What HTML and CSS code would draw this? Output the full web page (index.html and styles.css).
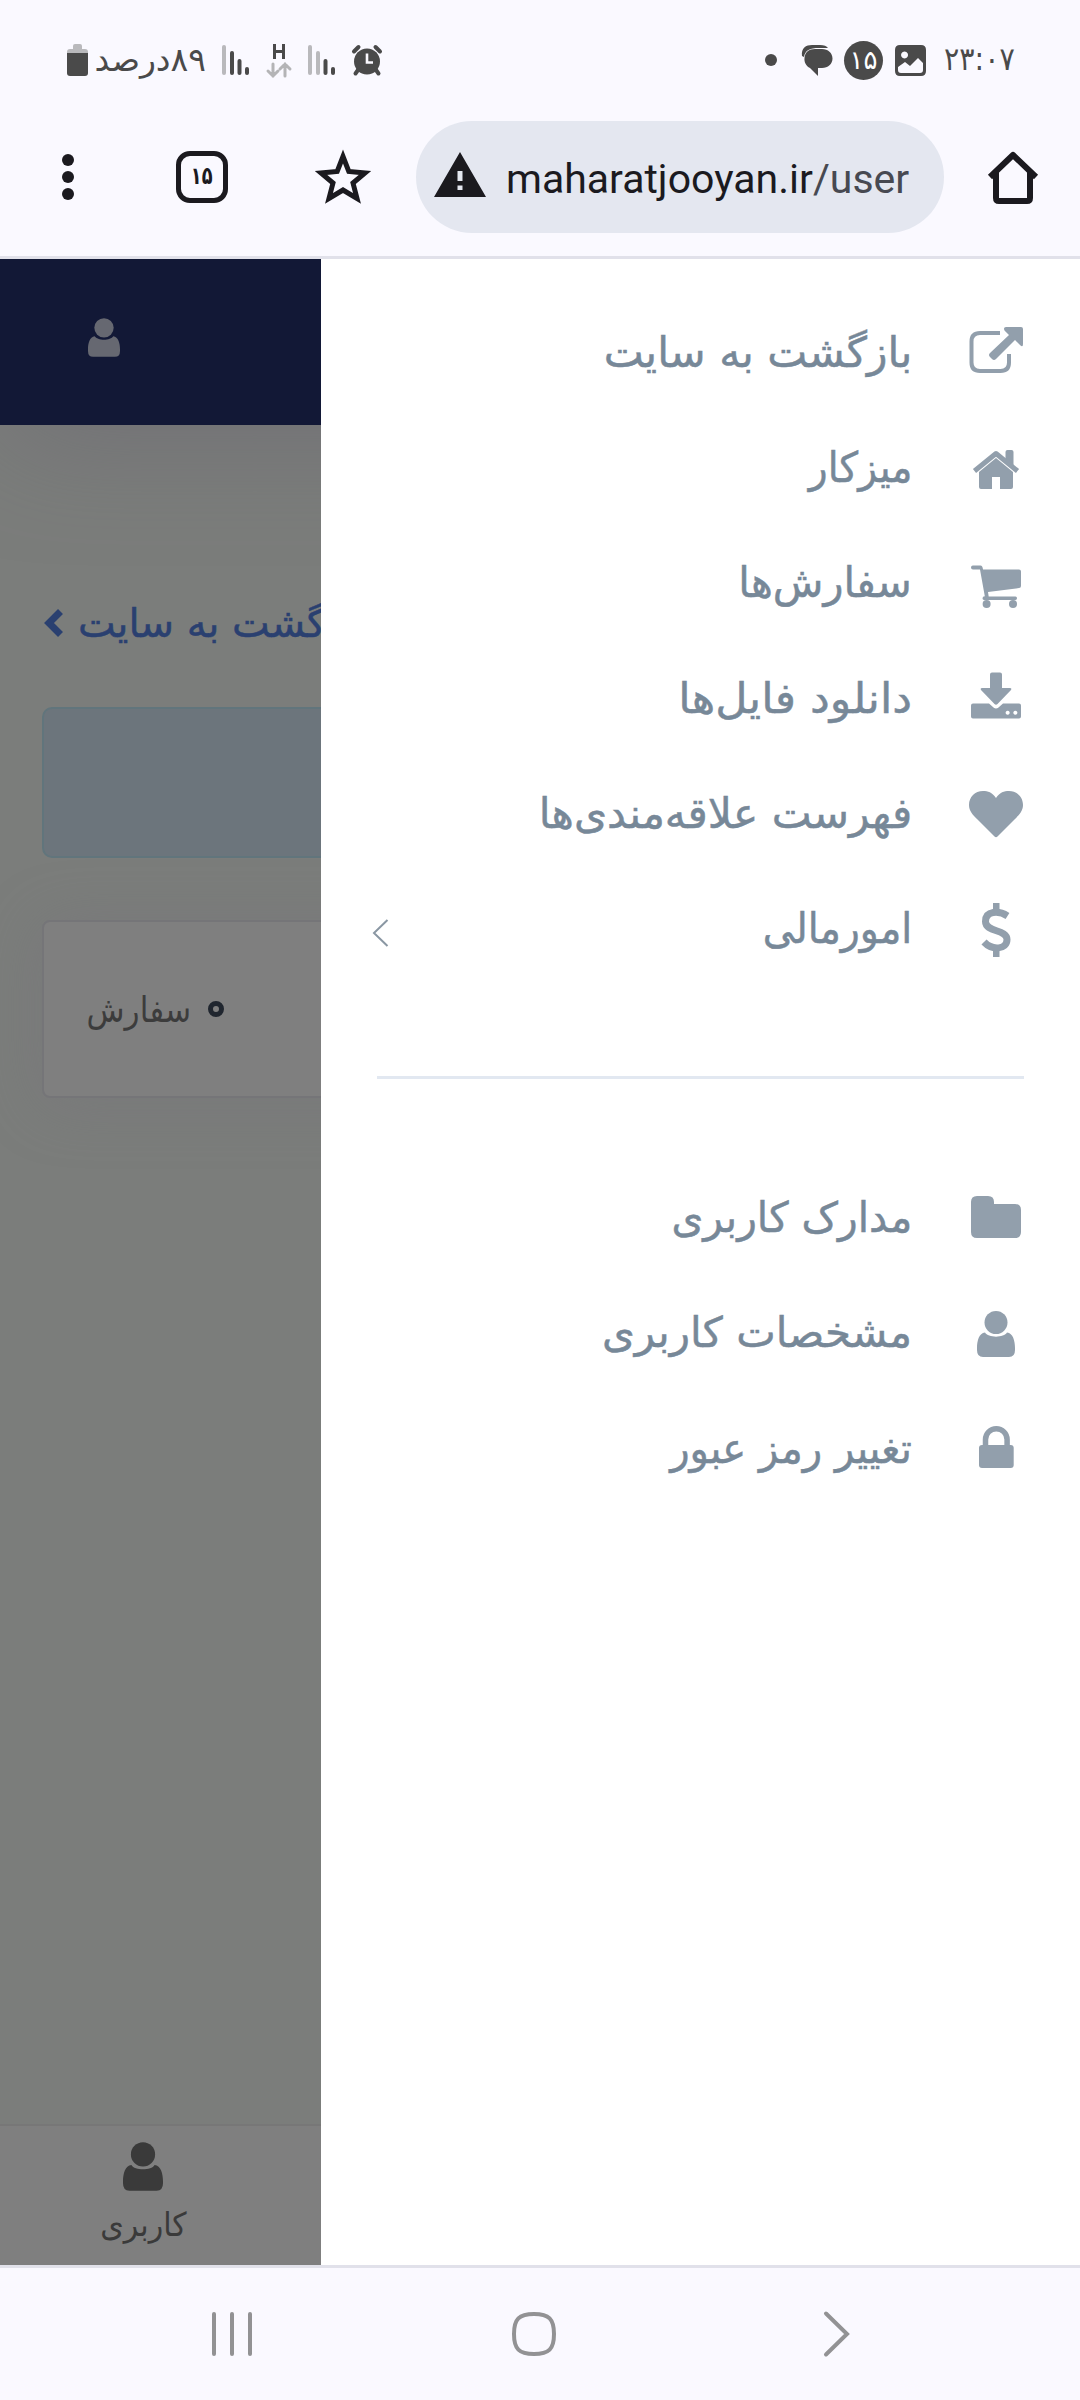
FILE: index.html
```html
<!DOCTYPE html>
<html lang="fa" dir="ltr">
<head>
<meta charset="utf-8">
<title>maharatjooyan.ir/user</title>
<link rel="stylesheet" href="styles.css">
</head>
<body>
<svg class="defs" aria-hidden="true">
  <symbol id="user" viewBox="0 0 38 46">
    <circle cx="19" cy="11.5" r="11.5"/>
    <path d="M8 21.5C11 27 27 27 30 21.5C36 22 38 30 38 37v2q0 7-6 7H6q-6 0-6-7v-2C0 30 2 22 8 21.5z"/>
  </symbol>
</svg>
<header class="status">
  <div class="status-left">
    <svg class="battery" width="21" height="33" viewBox="0 0 21 33"><path class="faint" d="M6 2q0-2 2-2h5q2 0 2 2v3h3q3 0 3 3v3H0V8q0-3 3-3h3z"/><path d="M0 9h21v20q0 3-3 3H3q-3 0-3-3z"/></svg>
    <span class="percent" dir="rtl">۸۹درصد</span>
    <svg class="signal" width="28" height="30" viewBox="0 0 28 30"><rect class="faint" width="4" height="30" rx="2"/><rect x="8" y="6" width="4" height="24" rx="2"/><rect x="15.500" y="14" width="4" height="16" rx="2"/><rect x="23" y="22" width="4" height="8" rx="2"/></svg>
    <svg class="data" width="26" height="33" viewBox="0 0 26 33"><path d="M7 0h3v6h6V0h3v15h-3V9h-6v6H7z"/><path class="faint-line" d="M7 20v12m-5-5 5 5 5-5M19 32V20m-5 5 5-5 5 5"/></svg>
    <svg class="signal" width="28" height="30" viewBox="0 0 28 30"><rect class="faint" width="4" height="30" rx="2"/><rect class="faint" x="8" y="6" width="4" height="24" rx="2"/><rect x="15.500" y="14" width="4" height="16" rx="2"/><rect x="23" y="22" width="4" height="8" rx="2"/></svg>
    <svg class="alarm" width="30" height="30" viewBox="0 0 30 30"><circle cx="15" cy="16.500" r="13"/><path class="dark-line" d="M2 6.500 6.500 2M28 6.500 23.500 2M6 25l-2.500 3.500M24 25l2.500 3.500"/><path class="light-line" d="M15 8.500v9h6"/></svg>
  </div>
  <div class="status-right">
    <i class="dot"></i>
    <svg class="chat" width="32" height="33" viewBox="0 0 32 33"><path d="M1 12C0 4 5 1 11 1h8q6 0 8 3h-9C9 4 4 6 3 13z"/><path d="M14 5h7c6 0 10.500 4 10.500 9.500S27 24 21 24h-4v8l-8-8C5 22 3 18 3.500 14C4 8 8 5 14 5z"/></svg>
    <span class="badge">۱۵</span>
    <svg class="photo" width="31" height="31" viewBox="0 0 31 31"><path fill-rule="evenodd" d="M5 0h21q5 0 5 5v21q0 5-5 5H5q-5 0-5-5V5q0-5 5-5zM3 22v3q0 3 3 3h19q3 0 3-3v-7l-5-5-8 8-5-4zM9.500 6.500a3.500 3.500 0 1 0 .1 0z"/></svg>
    <span class="time">۲۳:۰۷</span>
  </div>
</header>
<div class="toolbar">
  <svg class="more" width="12" height="48" viewBox="0 0 12 48"><circle cx="6" cy="7" r="6"/><circle cx="6" cy="24" r="6"/><circle cx="6" cy="41" r="6"/></svg>
  <span class="tabs"><b>۱۵</b></span>
  <svg class="star" width="56" height="54" viewBox="0 0 56 54"><path d="M28 6.500 33.800 21.500 50 23 38 33l4 15.500-14-8.500-14 8.500L18 33 6 23l16.200-1.500z"/></svg>
  <div class="address">
    <svg width="52" height="45" viewBox="0 0 52 45"><path fill-rule="evenodd" d="M26 0 52 45H0zM23.500 19v10h5V19zm0 14.500v4.500h5v-4.500z"/></svg>
    <span class="url">maharatjooyan.ir<span>/user</span></span>
  </div>
  <svg class="home" width="52" height="53" viewBox="0 0 52 53"><path d="M3 26 26 4l23 22M9 21v26q0 3 3 3h28q3 0 3-3V21"/></svg>
</div>
<main class="view">
  <div class="topbar"><svg width="32" height="39"><use href="#user"/></svg></div>
  <div class="page">
    <a class="back"><svg width="18" height="28" viewBox="0 0 18 28"><path d="M15.500 2.500 4 14l11.500 11.500"/></svg><span dir="rtl">بازگشت به سایت</span></a>
    <div class="alert"></div>
    <div class="card"><span dir="rtl">سفارش</span><i></i></div>
  </div>
  <div class="bottom"><div><svg width="40" height="49"><use href="#user"/></svg><span dir="rtl">کاربری</span></div></div>
  <nav class="drawer" dir="rtl">
    <a><svg viewBox="0 0 60 60"><path class="line" d="M34 13H14q-8.500 0-8.500 8.500v21q0 8.500 8.500 8.500h20.500q8.500 0 8.500-8.500V34"/><path d="M40 7h15q2 0 2 2v15q0 4-3 1l-5-5-19 19q-2 2-4 0l-2-2q-2-2 0-4l19-18-4.500-4.500Q37 7 40 7z"/></svg><span class="label w1">بازگشت به سایت</span></a>
    <a><svg viewBox="0 0 60 60"><path d="M39.500 25V17q0-2 2-2h4q2 0 2 2v14z"/><path class="roof" d="M8.500 36 30 18.500 51.500 36"/><path d="M30 23 47 37v15q0 2-2 2H34V42h-8v12H15q-2 0-2-2V37z"/></svg><span class="label w2">میزکار</span></a>
    <a><svg viewBox="0 0 60 60"><path d="M7 15.600h7.500q2 0 2.500 3.900H53q2 0 2 2V36q0 2-2 2L22 42l.7 4.500H49.500q1.500 0 1.500 1.700t-1.500 1.800H18q-1.500 0-1.500-1.800t2.300-2L14 19.500H7q-2 0-2-2t2-1.900z"/><circle cx="20.600" cy="54" r="4"/><circle cx="47" cy="54" r="4"/></svg><span class="label w3">سفارش‌ها</span></a>
    <a><svg viewBox="0 0 60 60"><path d="M26 7.600h8q2 0 2 2V23h8q2 0 1 2L31.500 39q-1.500 1.500-3 0L15 25q-1-2 1-2h8V9.600q0-2 2-2z"/><path fill-rule="evenodd" d="M7 38.500h16l4.500 4q2.500 2 5 0l4.500-4h16q2 0 2 2v11q0 2-2 2H7q-2 0-2-2v-11q0-2 2-2zM41.600 45.700a2 2 0 1 0 .1 0zM49.300 45.700a2 2 0 1 0 .1 0z"/></svg><span class="label w4">دانلود فایل‌ها</span></a>
    <a><svg viewBox="0 0 60 60"><path d="M30 18C34 12 38 11 43 11c8 0 14 6 14 14 0 6-4 10-8 14L31.500 56.500q-1.500 1.500-3 0L11 39C7 35 3 31 3 25 3 17 9 11 17 11c5 0 9 1 13 7z"/></svg><span class="label w5">فهرست علاقه‌مندی‌ها</span></a>
    <a><svg viewBox="0 0 60 60"><path class="coin" d="M41.500 20C33 14.500 19.500 14.500 19.500 25.500C19.500 36.500 41 33 41 43.500C41 54 26 54.500 18 46"/><path d="M27 7H33.500v9h-6.500zM27 51H33.500v10h-6.500z"/></svg><span class="label w6">امورمالی</span><svg class="chev" viewBox="0 0 17 28"><path d="M15.500 1 2 14l13.500 13"/></svg></a>
    <hr>
    <a><svg viewBox="0 0 60 60"><path d="M11 11h11q6 0 6 6v2h21q6 0 6 6v22q0 6-6 6H11q-6 0-6-6V17q0-6 6-6z"/></svg><span class="label w7">مدارک کاربری</span></a>
    <a><svg viewBox="0 0 60 60"><use href="#user" x="11" y="11" width="38" height="46"/></svg><span class="label w8">مشخصات کاربری</span></a>
    <a><svg viewBox="0 0 60 60"><path class="shackle" d="M19.500 32V24.500a10.800 10.800 0 0 1 21.600 0V32"/><rect x="13" y="30" width="34.700" height="23" rx="3"/></svg><span class="label w9">تغییر رمز عبور</span></a>
  </nav>
</main>
<footer class="nav">
  <svg width="42" height="44" viewBox="0 0 42 44"><path d="M3 2v40M21 2v40M39 2v40"/></svg>
  <svg class="nav-home" width="44" height="44" viewBox="0 0 44 44"><path d="M22 2C37 2 42 7 42 22S37 42 22 42 2 37 2 22 7 2 22 2z"/></svg>
  <svg width="27" height="46" viewBox="0 0 27 46"><path d="M3 2.500 24 23 3 43.500"/></svg>
</footer>
</body>
</html>
```
FILE: styles.css
```css
* { box-sizing: border-box; }
body {
  margin: 0;
  width: 1080px;
  height: 2400px;
  display: flex;
  flex-direction: column;
  overflow: hidden;
  background: #faf9ff;
  font-family: "DejaVu Sans", "Noto Sans", sans-serif;
}
svg { display: block; flex: none; overflow: visible; }
span { white-space: nowrap; }
.defs { width: 0; height: 0; position: absolute; }

.status {
  height: 120px;
  display: flex;
  justify-content: space-between;
  padding: 0 66px 0 67px;
  color: #4a4a4a;
  fill: #4a4a4a;
}
.status-left, .status-right { display: flex; align-items: center; height: 120px; }
.faint { fill: #b9b9bc; }
.faint-line { fill: none; stroke: #b4b4b6; stroke-width: 3; stroke-linecap: round; }
.dark-line { fill: none; stroke: #4a4a4a; stroke-width: 4; stroke-linecap: round; }
.light-line { fill: none; stroke: #faf9ff; stroke-width: 2.600; }
.percent { margin-left: 7px; width: 111px; font-size: 33px; line-height: 40px; }
.signal { margin-left: 16px; }
.data { margin-left: 16px; }
.data + .signal { margin-left: 16px; }
.alarm { margin-left: 16px; }
.dot { width: 12px; height: 12px; border-radius: 50%; background: #4a4a4a; margin-right: 24px; }
.badge {
  width: 39px;
  height: 39px;
  margin: 0 12px 0 11px;
  border-radius: 50%;
  background: #4a4a4a;
  color: #fff;
  font-size: 26px;
  line-height: 39px;
  text-align: center;
}
.time { width: 70px; margin-left: 18px; padding-bottom: 3px; font-size: 32px; transform: scaleX(.89); transform-origin: left; }

.toolbar {
  height: 139px;
  padding: 0 41px 22px 62px;
  display: flex;
  align-items: center;
  border-bottom: 3px solid #e1e1ea;
  fill: #1b1a1f;
  color: #1b1a1f;
}
.tabs {
  width: 52px;
  height: 52px;
  margin-left: 102px;
  border: 5.500px solid #1b1a1f;
  border-radius: 14px;
  font-size: 24px;
  line-height: 41px;
  text-align: center;
}
.tabs b { display: inline-block; transform: scaleX(.74); }
.star { margin-left: 87px; fill: none; stroke: #1b1a1f; stroke-width: 5; }
.address {
  width: 529px;
  height: 112px;
  margin-left: 45px;
  padding-left: 18px;
  display: flex;
  align-items: center;
  border-radius: 56px;
  background: #e4e7f0;
}
.address svg { margin-top: -6px; }
.url { margin-left: 20px; padding-top: 3px; font: 41px Roboto, sans-serif; }
.url span { color: #474951; }
.home { margin-left: 43px; fill: none; stroke: #1b1a1f; stroke-width: 6; stroke-linejoin: round; }

.view {
  position: relative;
  height: 2006px;
  display: flex;
  flex-direction: column;
  overflow: hidden;
  background: #7b7d7b;
}
.topbar {
  height: 166px;
  padding: 59px 88px;
  background: #121836;
  box-shadow: 0 20px 110px -10px rgba(104, 100, 112, .5);
  fill: #666871;
}
.page { flex: 1; padding: 164px 42px 0; }
.back {
  height: 68px;
  padding-left: 3px;
  display: flex;
  align-items: center;
  gap: 15px;
  color: #2a4070;
  font-size: 40px;
}
.back span { -webkit-text-stroke: .5px; }
.back path { fill: none; stroke: #2a4070; stroke-width: 7; }
.alert {
  height: 151px;
  margin-top: 50px;
  border: 2px solid #61757c;
  border-radius: 10px;
  background: #6c757c;
}
.card {
  height: 178px;
  margin-top: 62px;
  padding-left: 44px;
  display: flex;
  align-items: center;
  gap: 17px;
  border: 2px solid #757578;
  border-radius: 8px;
  background: #7f7f7f;
  box-shadow: 0 5px 60px rgba(118, 114, 122, .4);
  color: #3c3c3c;
  font-size: 35px;
}
.card span { width: 103px; padding-top: 2px; transform: scaleX(.89); transform-origin: right; }
.card i { width: 16px; height: 16px; border: 5px solid #20262f; border-radius: 50%; }
.bottom {
  height: 141px;
  padding: 16px 0 0 83px;
  border-top: 2px solid #777;
  background: #7f7f7f;
  fill: #3a3a3a;
  color: #3a3a3a;
}
.bottom div { width: 120px; display: flex; flex-direction: column; align-items: center; font-size: 33px; line-height: 68px; }
.bottom span { transform: scaleX(.91); }

.drawer {
  position: absolute;
  top: 0;
  right: 0;
  bottom: 0;
  width: 759px;
  padding: 33px 54px 0;
  background: #fff;
  color: #778898;
  fill: #929fac;
}
.drawer a { height: 115.200px; display: flex; align-items: center; gap: 54px; font-size: 42px; }
.drawer a > svg { width: 60px; height: 60px; }
.drawer .line { fill: none; stroke: #929fac; stroke-width: 4; }
.drawer .roof { fill: none; stroke: #929fac; stroke-width: 5; stroke-linejoin: round; }
.drawer .coin { fill: none; stroke: #929fac; stroke-width: 7; }
.drawer .shackle { fill: none; stroke: #929fac; stroke-width: 5.500; }
.drawer a > .chev { width: 17px; height: 28px; margin: 14px auto 0 -3px; fill: none; stroke: #8a97a3; stroke-width: 2; }
.drawer hr { height: 3px; margin: 93px 2px 78px; border: 0; background: #e2e8f1; }
/* horizontal fit of each menu label */
.label { padding-top: 6px; transform-origin: right; -webkit-text-stroke: .5px; }
.w1 { transform: scaleX(1.011); }
.w2 { transform: scaleX(.93); }
.w3 { transform: scaleX(.987); }
.w4 { transform: scaleX(1.058); }
.w5 { transform: scaleX(1.009); }
.w6 { transform: scaleX(.938); }
.w7 { transform: scaleX(.97); }
.w8 { transform: scaleX(1); }
.w9 { transform: scaleX(.956); }

.nav {
  height: 135px;
  padding: 0 230px 0 211px;
  display: flex;
  justify-content: space-between;
  align-items: center;
  border-top: 3px solid #e1e1ea;
  fill: none;
  stroke: #929294;
  stroke-width: 4;
  stroke-linecap: round;
}
.nav-home { margin-right: 8px; }
```
